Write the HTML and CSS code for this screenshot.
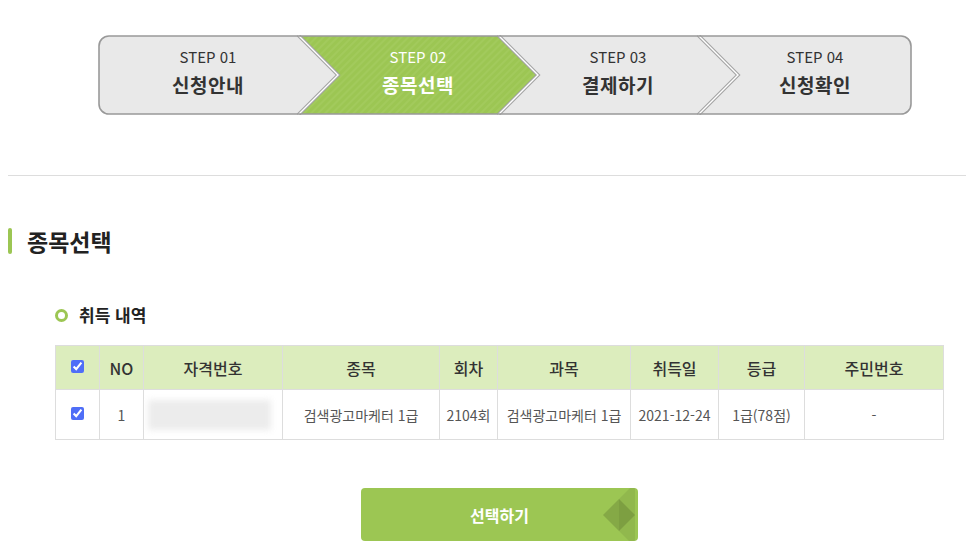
FILE: index.html
```html
<!DOCTYPE html>
<html lang="ko">
<head>
<meta charset="utf-8">
<title>종목선택</title>
<link rel="stylesheet" href="styles.css">
</head>
<body>
<div class="page">
  <div class="steps">
    <svg class="steps-bg" width="814" height="80" viewBox="0 0 814 80">
      <defs>
        <pattern id="stripe" width="5" height="5" patternUnits="userSpaceOnUse" patternTransform="rotate(45)">
          <rect width="5" height="5" fill="#9cc653"/>
          <rect width="2" height="5" fill="#a2ca5c"/>
        </pattern>
      </defs>
      <rect x="1" y="1" width="812" height="78" rx="10" fill="#e9e9e9"/>
      <polygon points="200,1 400,1 440,40 400,79 200,79 240,40" fill="url(#stripe)"/>
      <g fill="none">
        <polyline points="200,0 240,40 200,80" stroke="#a5a5a5" stroke-width="3.6"/>
        <polyline points="200,0 240,40 200,80" stroke="#ffffff" stroke-width="1.4"/>
        <polyline points="400,0 440,40 400,80" stroke="#a5a5a5" stroke-width="3.6"/>
        <polyline points="400,0 440,40 400,80" stroke="#ffffff" stroke-width="1.4"/>
        <polyline points="600,0 640,40 600,80" stroke="#a5a5a5" stroke-width="3.6"/>
        <polyline points="600,0 640,40 600,80" stroke="#ffffff" stroke-width="1.4"/>
        <rect x="1" y="1" width="812" height="78" rx="10" stroke="#999999" stroke-width="1.6"/>
      </g>
    </svg>
    <div class="step step-first"><span class="step-no">STEP 01</span><span class="step-name">신청안내</span></div>
    <div class="step step-on"><span class="step-no">STEP 02</span><span class="step-name">종목선택</span></div>
    <div class="step"><span class="step-no">STEP 03</span><span class="step-name">결제하기</span></div>
    <div class="step step-last"><span class="step-no">STEP 04</span><span class="step-name">신청확인</span></div>
  </div>

  <div class="divider"></div>

  <h2 class="title"><span class="title-bar"></span>종목선택</h2>

  <h3 class="subtitle"><span class="ring"></span>취득 내역</h3>

  <table class="grid">
    <colgroup>
      <col style="width:44px"><col style="width:44px"><col style="width:139px"><col style="width:157px"><col style="width:58px"><col style="width:133px"><col style="width:88px"><col style="width:86px"><col style="width:139px">
    </colgroup>
    <thead>
      <tr>
        <th><input type="checkbox" class="chk" checked></th>
        <th>NO</th>
        <th>자격번호</th>
        <th>종목</th>
        <th>회차</th>
        <th>과목</th>
        <th>취득일</th>
        <th>등급</th>
        <th>주민번호</th>
      </tr>
    </thead>
    <tbody>
      <tr>
        <td><input type="checkbox" class="chk" checked></td>
        <td>1</td>
        <td class="blur-cell"><div class="blur"></div></td>
        <td>검색광고마케터 1급</td>
        <td>2104회</td>
        <td>검색광고마케터 1급</td>
        <td>2021-12-24</td>
        <td>1급(78점)</td>
        <td>-</td>
      </tr>
    </tbody>
  </table>

  <div class="actions">
    <button class="btn-select" type="button">선택하기
      <svg class="btn-deco" width="40" height="53" viewBox="0 0 40 53">
        <polygon points="5,27 37,-5 37,59" fill="#000" fill-opacity="0.07"/>
        <polygon points="5,27 21,11 37,27 21,43" fill="#000" fill-opacity="0.08"/>
        <polygon points="21,11 37,27 21,43" fill="#000" fill-opacity="0.06"/>
      </svg>
    </button>
  </div>
</div>
</body>
</html>
```

FILE: styles.css
```css
* { box-sizing: border-box; }
html, body { margin: 0; padding: 0; background: #fff; }
body {
  font-family: "Noto Sans CJK KR", "Noto Sans", sans-serif;
  color: #333;
}
.page { padding-left: 8px; width: 966px; }

.steps {
  position: relative;
  margin: 35px 0 0 90px;
  width: 814px;
  height: 80px;
  display: flex;
}
.steps-bg { position: absolute; left: 0; top: 0; }
.step {
  position: relative;
  width: 200px;
  display: flex;
  flex-direction: column;
  align-items: center;
  padding-top: 12px;
  color: #333;
}
.step-first { width: 220px; }
.step-last { width: 194px; }
.step-no { font-size: 15px; line-height: 20px; }
.step-name { font-size: 19px; font-weight: 700; line-height: 28px; margin-top: 4px; letter-spacing: 0.5px; }
.step-on { color: #fff; }

.divider {
  margin-top: 60px;
  border-top: 1px solid #dddddd;
}

.title {
  margin: 51px 0 0 0;
  display: flex;
  align-items: center;
  font-size: 23px;
  font-weight: 700;
  line-height: 28px;
  color: #222;
}
.title-bar {
  width: 4px;
  height: 26px;
  border-radius: 2px;
  background: #9cc653;
  margin-right: 15px;
}

.subtitle {
  margin: 48px 0 0 47px;
  display: flex;
  align-items: center;
  font-size: 17px;
  font-weight: 700;
  line-height: 24px;
  color: #222;
}
.ring {
  width: 13px;
  height: 13px;
  border: 3px solid #9cc653;
  border-radius: 50%;
  margin-right: 11px;
}

.grid {
  margin: 18px 0 0 47px;
  width: 889px;
  border-collapse: collapse;
  table-layout: fixed;
}
.grid th, .grid td {
  border: 1px solid #dddddd;
  text-align: center;
  padding: 0;
  white-space: nowrap;
}
.grid th {
  background: #dcedbd;
  height: 44px;
  font-size: 16px;
  font-weight: 500;
  color: #333;
}
.grid td {
  height: 50px;
  font-size: 14px;
  color: #555;
}
.chk {
  display: block;
  width: 13px;
  height: 13px;
  margin: -3px auto 0;
  accent-color: #4f6ef7;
}
.blur-cell { padding: 0 8px; }
.blur {
  height: 30px;
  width: 123px;
  margin-left: 4px;
  background: #ececec;
  filter: blur(3px);
}

.actions {
  margin-top: 48px;
  display: flex;
  padding-left: 353px;
}
.btn-select {
  position: relative;
  width: 277px;
  height: 53px;
  border: none;
  border-radius: 4px;
  background: #9cc653;
  color: #fff;
  font-family: "Noto Sans CJK KR", "Noto Sans", sans-serif;
  font-size: 16px;
  font-weight: 700;
  overflow: hidden;
  padding: 0;
}
.btn-deco { position: absolute; right: 0; top: 0; }
```
